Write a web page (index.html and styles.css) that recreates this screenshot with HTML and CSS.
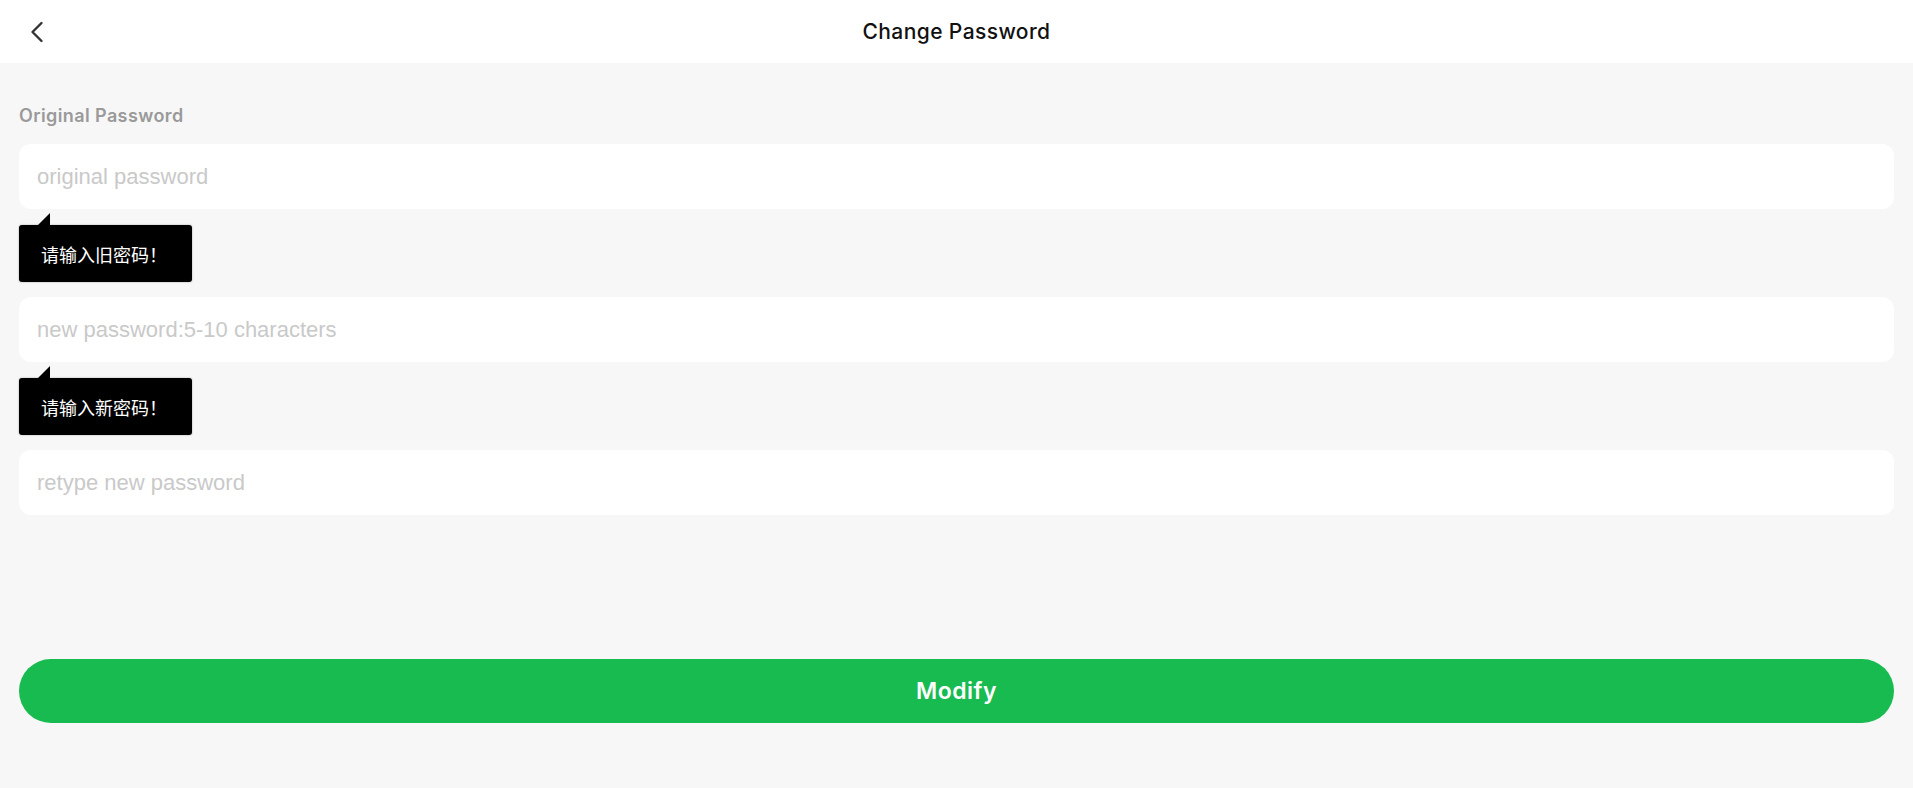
FILE: index.html
```html
<!DOCTYPE html>
<html lang="en">
<head>
<meta charset="utf-8">
<title>Change Password</title>
<link rel="stylesheet" href="styles.css">
</head>
<body>
<header class="topbar">
  <button class="back" aria-label="Back">
    <svg width="14" height="22" viewBox="0 0 14 22"><path d="M11.5 2 L2.5 11 L11.5 20" fill="none" stroke="#333" stroke-width="2.4" stroke-linecap="round" stroke-linejoin="round"/></svg>
  </button>
  <h1 class="title">Change Password</h1>
</header>
<main class="content">
  <label class="label">Original Password</label>
  <div class="field">
    <input class="input" type="password" placeholder="original password">
    <div class="tip">请输入旧密码！</div>
  </div>
  <div class="field">
    <input class="input" type="password" placeholder="new password:5-10 characters">
    <div class="tip">请输入新密码！</div>
  </div>
  <div class="field">
    <input class="input" type="password" placeholder="retype new password">
  </div>
  <button class="submit">Modify</button>
</main>
</body>
</html>
```
FILE: styles.css
```css
* { box-sizing: border-box; }
html, body { margin: 0; padding: 0; }
body {
  background: #f7f7f7;
  font-family: Inter, "Noto Sans", sans-serif;
  height: 788px;
  overflow: hidden;
}
.topbar {
  height: 63px;
  background: #fff;
  display: flex;
  align-items: center;
  justify-content: center;
  position: relative;
}
.back {
  position: absolute;
  left: 30px;
  top: 21px;
  border: 0;
  background: none;
  padding: 0;
  width: 14px;
  height: 22px;
  display: flex;
}
.title {
  margin: 0;
  font-size: 21px;
  font-weight: 500;
  color: #111;
  letter-spacing: 0.4px;
}
.content {
  padding: 41px 19px 0;
  display: flex;
  flex-direction: column;
}
.label {
  font-size: 18px;
  font-weight: 600;
  line-height: 24px;
  color: #9a9a9a;
  letter-spacing: 0.4px;
  margin-bottom: 16px;
}
.field {
  position: relative;
  margin-bottom: 88px;
}
.field:nth-of-type(3) { margin-bottom: 144px; }
.input {
  display: block;
  width: 100%;
  height: 65px;
  border: 0;
  border-radius: 12px;
  background: #fff;
  padding: 0 18px;
  font-family: "Liberation Sans", Arial, sans-serif;
  font-size: 22px;
  color: #333;
  outline: none;
}
.input::placeholder { color: #c9c9c9; }
.tip {
  position: absolute;
  left: 0;
  top: 81px;
  height: 57px;
  padding: 0 25px 0 22px;
  display: flex;
  align-items: center;
  background: #000;
  color: #fff;
  font-family: "Noto Sans CJK SC", sans-serif;
  font-size: 18px;
  border-radius: 3px;
  box-shadow: 0 0 2px rgba(0,0,0,0.35);
}
.tip::before {
  content: "";
  position: absolute;
  left: 19px;
  top: -12px;
  border-left: 12px solid transparent;
  border-bottom: 12px solid #000;
}
.submit {
  height: 64px;
  border: 0;
  border-radius: 32px;
  background: #17bb50;
  color: #fff;
  font-family: Inter, sans-serif;
  font-size: 23px;
  font-weight: 600;
  letter-spacing: 0.5px;
}
```
